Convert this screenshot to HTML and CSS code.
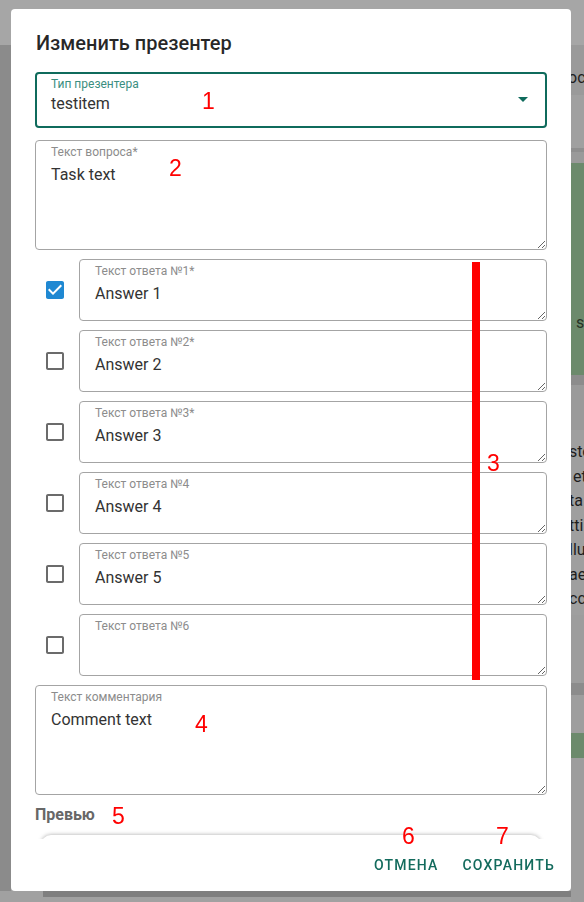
FILE: index.html
```html
<!DOCTYPE html>
<html lang="ru">
<head>
<meta charset="utf-8">
<title>Изменить презентер</title>
<link rel="stylesheet" href="styles.css">
</head>
<body>
<div class="page">
  <div class="page-header"></div>
  <div class="page-main">
    <div class="page-left"></div>
    <div class="page-center">
      <div class="pc-fill"></div>
      <div class="pc-card-edge"></div>
    </div>
    <div class="page-right">
      <div class="pr-tab">ocl</div>
      <div class="pr-gap-a"></div>
      <div class="pr-line"></div>
      <div class="pr-gap-b"></div>
      <div class="pr-green"><span class="pr-green-text">s</span></div>
      <div class="pr-shadow"></div>
      <div class="pr-gap-c"></div>
      <div class="pr-text">
        <div>sto</div><div>&nbsp;et</div><div>ta</div><div>tti</div><div>llu</div><div>ae</div><div>cc</div>
      </div>
      <div class="pr-gap-d"></div>
      <div class="pr-line2"></div>
      <div class="pr-gap-e"></div>
      <div class="pr-green2"></div>
    </div>
  </div>
</div>

<div class="dialog">
  <h2 class="dialog-title">Изменить презентер</h2>
  <div class="dialog-content">
    <div class="select">
      <div class="select-text">
        <span class="select-label">Тип презентера</span>
        <span class="select-value">testitem</span>
      </div>
      <svg class="select-arrow" viewBox="0 0 24 24"><path d="M7 10l5 5 5-5z"/></svg>
    </div>

    <div class="field field-tall">
      <textarea>Task text</textarea>
      <span class="field-label">Текст вопроса*</span>
    </div>

    <div class="answers">
      <div class="answer">
        <div class="cb"><svg class="cb-checked" viewBox="0 0 24 24"><path d="M19 3H5c-1.11 0-2 .9-2 2v14c0 1.1.89 2 2 2h14c1.11 0 2-.9 2-2V5c0-1.1-.89-2-2-2zm-9 14l-5-5 1.41-1.41L10 14.17l7.59-7.59L19 8l-9 9z"/></svg></div>
        <div class="field field-short"><textarea>Answer 1</textarea><span class="field-label">Текст ответа №1*</span></div>
      </div>
      <div class="answer">
        <div class="cb"><svg class="cb-blank" viewBox="0 0 24 24"><path d="M19 5v14H5V5h14m0-2H5c-1.1 0-2 .9-2 2v14c0 1.1.9 2 2 2h14c1.1 0 2-.9 2-2V5c0-1.1-.9-2-2-2z"/></svg></div>
        <div class="field field-short"><textarea>Answer 2</textarea><span class="field-label">Текст ответа №2*</span></div>
      </div>
      <div class="answer">
        <div class="cb"><svg class="cb-blank" viewBox="0 0 24 24"><path d="M19 5v14H5V5h14m0-2H5c-1.1 0-2 .9-2 2v14c0 1.1.9 2 2 2h14c1.1 0 2-.9 2-2V5c0-1.1-.9-2-2-2z"/></svg></div>
        <div class="field field-short"><textarea>Answer 3</textarea><span class="field-label">Текст ответа №3*</span></div>
      </div>
      <div class="answer">
        <div class="cb"><svg class="cb-blank" viewBox="0 0 24 24"><path d="M19 5v14H5V5h14m0-2H5c-1.1 0-2 .9-2 2v14c0 1.1.9 2 2 2h14c1.1 0 2-.9 2-2V5c0-1.1-.9-2-2-2z"/></svg></div>
        <div class="field field-short"><textarea>Answer 4</textarea><span class="field-label">Текст ответа №4</span></div>
      </div>
      <div class="answer">
        <div class="cb"><svg class="cb-blank" viewBox="0 0 24 24"><path d="M19 5v14H5V5h14m0-2H5c-1.1 0-2 .9-2 2v14c0 1.1.9 2 2 2h14c1.1 0 2-.9 2-2V5c0-1.1-.9-2-2-2z"/></svg></div>
        <div class="field field-short"><textarea>Answer 5</textarea><span class="field-label">Текст ответа №5</span></div>
      </div>
      <div class="answer">
        <div class="cb"><svg class="cb-blank" viewBox="0 0 24 24"><path d="M19 5v14H5V5h14m0-2H5c-1.1 0-2 .9-2 2v14c0 1.1.9 2 2 2h14c1.1 0 2-.9 2-2V5c0-1.1-.9-2-2-2z"/></svg></div>
        <div class="field field-short"><textarea></textarea><span class="field-label">Текст ответа №6</span></div>
      </div>
    </div>

    <div class="field field-tall">
      <textarea>Comment text</textarea>
      <span class="field-label">Текст комментария</span>
    </div>

    <div class="preview-title">Превью</div>
    <div class="preview-card"></div>
  </div>
  <div class="dialog-actions">
    <button class="btn">Отмена</button>
    <button class="btn">Сохранить</button>
  </div>
</div>

<div class="anno n1">1</div>
<div class="anno n2">2</div>
<div class="anno n3">3</div>
<div class="anno n4">4</div>
<div class="anno n5">5</div>
<div class="anno n6">6</div>
<div class="anno n7">7</div>
<div class="anno-bar"></div>
</body>
</html>
```
FILE: styles.css
```css
* { box-sizing: border-box; }
html, body { margin: 0; padding: 0; }
body {
  width: 584px;
  height: 902px;
  overflow: hidden;
  font-family: Roboto, "Noto Sans", sans-serif;
  background: #a1a1a1;
}

/* dimmed page behind the dialog */
.page { height: 902px; display: flex; flex-direction: column; }
.page-header { height: 45px; background: #a6a6a6; flex: none; }
.page-main { flex: 1; display: flex; }
.page-left { width: 11px; height: 846px; background: #8b8b8b; flex: none; }
.page-center { flex: 1; display: flex; flex-direction: column; }
.pc-fill { flex: 1; }
.pc-card-edge { height: 6px; margin: 0 0 5px 32px; background: #7f7f7f; }
.page-right { width: 13px; flex: none; display: flex; flex-direction: column; overflow: hidden; background: #9d9d9d; }
.pr-tab { height: 50px; background: #9a9a9a; font-size: 16px; line-height: 66px; color: #1e1e1e; margin-left: -3px; white-space: nowrap; }
.pr-gap-a { height: 53px; background: #a0a0a0; }
.pr-line { height: 4px; background: #8f8f8f; }
.pr-gap-b { height: 11px; background: #9a9a9a; }
.pr-green { height: 212px; background: #6c8a6c; padding-top: 150px; padding-left: 5px; font-size: 16px; line-height: 20px; color: #263226; }
.pr-shadow { height: 10px; background: #8c8c8c; }
.pr-gap-c { height: 45px; background: #9a9a9a; }
.pr-text { height: 185px; background: #9f9f9f; padding-top: 10px; font-size: 16px; line-height: 24.5px; color: #1e1e1e; white-space: nowrap; margin-left: -2px; }
.pr-gap-d { height: 68px; background: #9d9d9d; }
.pr-line2 { height: 12px; background: #8c8c8c; }
.pr-gap-e { height: 38px; background: #9e9e9e; }
.pr-green2 { height: 25px; background: #6c8a6c; }

/* dialog */
.dialog {
  position: fixed;
  left: 11px;
  top: 9px;
  width: 560px;
  height: 882px;
  background: #fff;
  border-radius: 4px;
  display: flex;
  flex-direction: column;
  z-index: 1;
}
.dialog-title {
  margin: 0;
  padding: 18px 25px 13px;
  font-size: 20px;
  line-height: 32px;
  font-weight: 500;
  color: rgba(0, 0, 0, 0.85);
  flex: none;
}
.dialog-content {
  flex: 1;
  min-height: 0;
  overflow: hidden;
  padding: 0 24px;
  display: flex;
  flex-direction: column;
}

.select {
  flex: none;
  height: 56px;
  border: 2px solid #0f6b5c;
  border-radius: 4px;
  display: flex;
  padding: 3px 10px 0 14px;
  margin-bottom: 12px;
}
.select-text { flex: 1; display: flex; flex-direction: column; }
.select-label { font-size: 12px; line-height: 14px; color: #3b8e7f; }
.select-value { margin-top: 3px; font-size: 16px; line-height: 19px; color: #333; }
.select-arrow { width: 24px; height: 24px; flex: none; margin-top: 10px; fill: #0f6b5c; }

.field { position: relative; flex: none; }
.field textarea {
  display: block;
  width: 100%;
  margin: 0;
  border: 1px solid #a4a4a4;
  border-radius: 4px;
  padding: 24px 15px 0;
  font-family: Roboto, "Noto Sans", sans-serif;
  font-size: 16px;
  line-height: 19px;
  color: #333;
  background: #fff;
  outline: none;
}
.field-tall textarea { height: 110px; }
.field-short textarea { height: 62px; }
.field-label {
  position: absolute;
  top: 5px;
  left: 16px;
  font-size: 12px;
  line-height: 14px;
  color: #8c8c8c;
  pointer-events: none;
}

.answers { display: flex; flex-direction: column; gap: 9px; margin: 9px 0; flex: none; }
.answer { display: flex; align-items: center; }
.cb { width: 44px; flex: none; display: flex; }
.cb svg { width: 24px; height: 24px; margin-left: 8px; }
.cb-checked { fill: #1f88d2; }
.cb-blank { fill: #6b6b6b; }
.answer .field { flex: 1; }

.preview-title {
  flex: none;
  margin-top: 8px;
  font-size: 16px;
  line-height: 24px;
  font-weight: 700;
  color: #676767;
}
.preview-card {
  flex: none;
  margin: 8px 6px 0;
  height: 120px;
  border-radius: 10px;
  background: #fff;
  box-shadow: 0 0 4px rgba(0, 0, 0, 0.35);
}

.dialog-actions {
  flex: none;
  display: flex;
  justify-content: flex-end;
  gap: 8px;
  padding: 8px;
}
.btn {
  font-family: Roboto, "Noto Sans", sans-serif;
  font-size: 14px;
  line-height: 24px;
  font-weight: 500;
  letter-spacing: 1.2px;
  text-transform: uppercase;
  color: #136b5d;
  background: none;
  border: 0;
  border-radius: 4px;
  padding: 6px 8px;
}

/* red annotations drawn over the screenshot */
.anno {
  position: absolute;
  z-index: 2;
  font-family: "Liberation Sans", Arial, sans-serif;
  font-size: 23px;
  line-height: 23px;
  color: #ff0000;
}
.n1 { left: 202px; top: 90px; }
.n2 { left: 169px; top: 157px; }
.n3 { left: 487px; top: 452px; }
.n4 { left: 195px; top: 713px; }
.n5 { left: 112px; top: 805px; }
.n6 { left: 402px; top: 825px; }
.n7 { left: 496px; top: 825px; }
.anno-bar {
  position: absolute;
  z-index: 2;
  left: 472px;
  top: 262px;
  width: 8px;
  height: 418px;
  background: #ff0000;
}
```
